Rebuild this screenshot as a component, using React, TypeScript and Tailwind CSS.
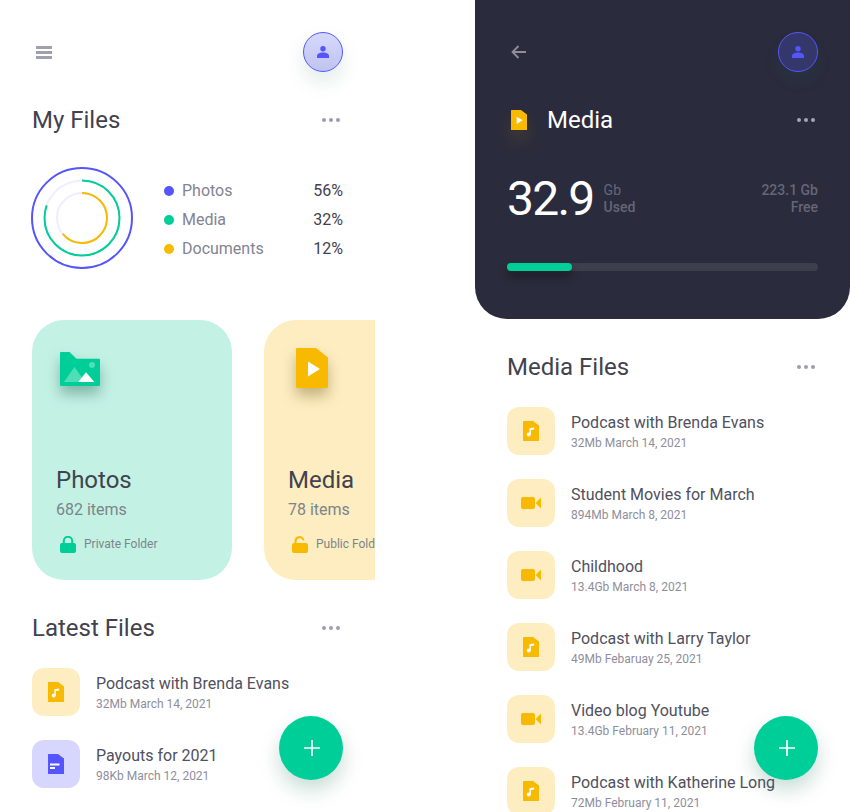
import type { ReactNode } from 'react';

function FileShape({ color, children, className }: { color: string; children?: ReactNode; className?: string }) {
  return (
    <svg width="16" height="20" viewBox="0 0 16 20" className={className}>
      <path d="M.6 0H10l6 4.6v14.8a.6.6 0 0 1-.6.6H.6a.6.6 0 0 1-.6-.6V.6A.6.6 0 0 1 .6 0z" fill={color} />
      {children}
    </svg>
  );
}

function MusicFile() {
  return (
    <FileShape color="#f8ba00">
      <circle cx="5.7" cy="13.4" r="2" fill="#fff" />
      <path d="M6.4 13.4V7.2l4.8-.7v2.1l-3.3.5v4.3z" fill="#fff" />
    </FileShape>
  );
}

function DocFile() {
  return (
    <FileShape color="#5555ff">
      <rect x="2" y="9.5" width="9.5" height="2" fill="#fff" />
      <rect x="2" y="13" width="5" height="2" fill="#fff" />
    </FileShape>
  );
}

function VideoIcon() {
  return (
    <svg width="20" height="12" viewBox="0 0 20 12">
      <rect width="14" height="12" rx="2" fill="#f8ba00" />
      <path d="M20 .5v11L15 6.6v-1.2z" fill="#f8ba00" />
    </svg>
  );
}

function PersonIcon() {
  return (
    <svg width="12" height="12" viewBox="0 0 12 12">
      <circle cx="6" cy="2.7" r="2.7" fill="#5555ff" />
      <path d="M0 12V9.8C0 7.9 2.8 6.6 6 6.6s6 1.3 6 3.2V12z" fill="#5555ff" />
    </svg>
  );
}

function LockIcon({ color, open }: { color: string; open?: boolean }) {
  return (
    <svg width="16" height="17" viewBox="0 0 16 17">
      <rect y="7" width="16" height="10" rx="2" fill={color} />
      <path
        d={open ? 'M3.6 7V5a4 4 0 0 1 7.6-1.6' : 'M3.8 8V5a4.2 4.2 0 0 1 8.4 0v3'}
        fill="none"
        stroke={color}
        strokeWidth="2"
        strokeLinecap={open ? 'round' : 'butt'}
      />
    </svg>
  );
}

function Dots({ className }: { className: string }) {
  return (
    <div className="flex gap-[3px]">
      <span className={`h-1 w-1 rounded-full ${className}`} />
      <span className={`h-1 w-1 rounded-full ${className}`} />
      <span className={`h-1 w-1 rounded-full ${className}`} />
    </div>
  );
}

function Avatar({ dark }: { dark?: boolean }) {
  return (
    <div
      className={`flex h-10 w-10 items-center justify-center rounded-full border border-[#5555ff] ${
        dark
          ? 'bg-[#33376a] shadow-[0_10px_20px_rgba(0,206,152,0.05)]'
          : 'bg-gradient-to-b from-[#d6d8fe] to-[#bfc4ef] shadow-[0_10px_20px_rgba(0,100,70,0.12)]'
      }`}
    >
      <PersonIcon />
    </div>
  );
}

function SectionTitle({ title }: { title: string }) {
  return (
    <div className="flex h-7 items-center justify-between pr-[3px]">
      <h2 className="text-2xl font-normal text-[#42424f]">{title}</h2>
      <Dots className="bg-[#9d9dae]" />
    </div>
  );
}

function FileRow({ icon, bg, title, meta }: { icon: ReactNode; bg: string; title: string; meta: string }) {
  return (
    <div className="flex h-12 items-center gap-4">
      <div className={`flex h-12 w-12 shrink-0 items-center justify-center rounded-xl ${bg}`}>{icon}</div>
      <div className="whitespace-nowrap pt-[2px]">
        <div className="text-base leading-5 text-[#50505e]">{title}</div>
        <div className="mt-[2px] text-xs leading-4 text-[#8e8e9c]">{meta}</div>
      </div>
    </div>
  );
}

function Fab() {
  return (
    <div className="absolute bottom-8 right-8 flex h-16 w-16 items-center justify-center rounded-full bg-[#00ce98] shadow-[0_10px_20px_rgba(0,100,70,0.22)]">
      <svg width="16" height="16" viewBox="0 0 16 16" className="ml-px">
        <path d="M8 0v16M0 8h16" stroke="#fff" strokeWidth="1.7" />
      </svg>
    </div>
  );
}

function Ring() {
  return (
    <svg width="102" height="102" viewBox="0 0 102 102" className="shrink-0">
      <circle cx="51" cy="51" r="50" fill="none" stroke="#5555ff" strokeWidth="2" />
      <circle cx="51" cy="51" r="37.5" fill="none" stroke="#eeeeff" strokeWidth="2" />
      <circle cx="51" cy="51" r="25" fill="none" stroke="#eeeeff" strokeWidth="2" />
      <circle
        cx="51"
        cy="51"
        r="37.5"
        fill="none"
        stroke="#00ce98"
        strokeWidth="2"
        pathLength="100"
        strokeDasharray="80.5 100"
        transform="rotate(-90 51 51)"
      />
      <circle
        cx="51"
        cy="51"
        r="25"
        fill="none"
        stroke="#f8ba00"
        strokeWidth="2"
        pathLength="100"
        strokeDasharray="64 100"
        transform="rotate(-90 51 51)"
      />
    </svg>
  );
}

function LegendRow({ dot, label, value }: { dot: string; label: string; value: string }) {
  return (
    <div className="flex h-[29px] items-center">
      <span className={`h-[10px] w-[10px] rounded-full ${dot}`} />
      <span className="ml-2 text-base text-[#838392]">{label}</span>
      <span className="ml-auto text-base text-[#42424f]">{value}</span>
    </div>
  );
}

function FolderCard({ bg, icon, iconClass, title, items, lock, lockLabel }: {
  bg: string;
  icon: ReactNode;
  iconClass: string;
  title: string;
  items: string;
  lock: ReactNode;
  lockLabel: string;
}) {
  return (
    <div className={`flex h-[260px] w-[200px] shrink-0 flex-col rounded-[32px] px-6 ${bg}`}>
      <div className={iconClass}>{icon}</div>
      <div className="mt-auto text-2xl leading-7 text-[#42424f]">{title}</div>
      <div className="mt-[6px] text-base leading-5 text-[#7b8589]">{items}</div>
      <div className="mb-[27px] mt-[15px] flex h-[18px] items-center gap-2 pl-1">
        {lock}
        <span className="whitespace-nowrap text-xs text-[#7b8589]">{lockLabel}</span>
      </div>
    </div>
  );
}

function FolderIcon() {
  return (
    <svg width="40" height="34" viewBox="0 0 40 34" className="drop-shadow-[0_8px_7px_rgba(0,70,50,0.35)]">
      <path d="M1 0h8.5l7 6.7H39a1 1 0 0 1 1 1V33a1 1 0 0 1-1 1H1a1 1 0 0 1-1-1V1a1 1 0 0 1 1-1z" fill="#00ce98" />
      <circle cx="32" cy="13" r="3" fill="#4fdfb8" />
      <path d="M4 30l10.5-15L25 30z" fill="#4fdfb8" />
      <path d="M18.3 30l7.7-9.7 8.3 9.7z" fill="#fff" />
    </svg>
  );
}

function PlayFile() {
  return (
    <svg width="32" height="40" viewBox="0 0 32 40" className="drop-shadow-[0_8px_7px_rgba(90,70,0,0.35)]">
      <path d="M1 0h19l12 9.5V39a1 1 0 0 1-1 1H1a1 1 0 0 1-1-1V1a1 1 0 0 1 1-1z" fill="#f8ba00" />
      <path d="M12 13.5l12 7.5-12 7.5z" fill="#fff" />
    </svg>
  );
}

function FilesScreen() {
  return (
    <div className="relative h-[812px] w-[375px] shrink-0 overflow-hidden bg-white px-8 pt-8">
      <div className="flex h-10 items-center justify-between">
        <div className="ml-1 flex w-4 flex-col gap-[2px]">
          <span className="h-[3px] bg-[#a0a0b0]" />
          <span className="h-[3px] bg-[#a0a0b0]" />
          <span className="h-[3px] bg-[#a0a0b0]" />
        </div>
        <Avatar />
      </div>

      <div className="mt-[34px]">
        <SectionTitle title="My Files" />
      </div>

      <div className="mt-[33px] flex items-center">
        <div className="-ml-px">
          <Ring />
        </div>
        <div className="ml-[31px] mt-1 flex-1">
          <LegendRow dot="bg-[#5555ff]" label="Photos" value="56%" />
          <LegendRow dot="bg-[#00ce98]" label="Media" value="32%" />
          <LegendRow dot="bg-[#f8ba00]" label="Documents" value="12%" />
        </div>
      </div>

      <div className="-mr-8 mt-[51px] flex gap-8 overflow-hidden">
        <FolderCard
          bg="bg-[#c3f2e5]"
          icon={<FolderIcon />}
          iconClass="ml-1 mt-8"
          title="Photos"
          items="682 items"
          lock={<LockIcon color="#00ce98" />}
          lockLabel="Private Folder"
        />
        <FolderCard
          bg="bg-[#fdedc1]"
          icon={<PlayFile />}
          iconClass="ml-2 mt-7"
          title="Media"
          items="78 items"
          lock={<LockIcon color="#f8ba00" open />}
          lockLabel="Public Folder"
        />
      </div>

      <div className="mt-[34px]">
        <SectionTitle title="Latest Files" />
      </div>

      <div className="mt-[26px] flex flex-col gap-6">
        <FileRow icon={<MusicFile />} bg="bg-[#fdedc1]" title="Podcast with Brenda Evans" meta="32Mb March 14, 2021" />
        <FileRow icon={<DocFile />} bg="bg-[#d6d6ff]" title="Payouts for 2021" meta="98Kb March 12, 2021" />
      </div>

      <Fab />
    </div>
  );
}

const mediaFiles = [
  { kind: 'music', title: 'Podcast with Brenda Evans', meta: '32Mb March 14, 2021' },
  { kind: 'video', title: 'Student Movies for March', meta: '894Mb March 8, 2021' },
  { kind: 'video', title: 'Childhood', meta: '13.4Gb March 8, 2021' },
  { kind: 'music', title: 'Podcast with Larry Taylor', meta: '49Mb Febaruay 25, 2021' },
  { kind: 'video', title: 'Video blog Youtube', meta: '13.4Gb February 11, 2021' },
  { kind: 'music', title: 'Podcast with Katherine Long', meta: '72Mb February 11, 2021' },
];

function MediaScreen() {
  return (
    <div className="relative h-[812px] w-[375px] shrink-0 overflow-hidden bg-white">
      <div className="h-[319px] rounded-b-[32px] bg-[#2a2b3c] px-8 pt-8">
        <div className="flex h-10 items-center justify-between">
          <svg width="15" height="14" viewBox="0 0 15 14" className="ml-[4px]">
            <path d="M15 7H1.5M7.5 1L1.5 7l6 6" fill="none" stroke="#8e8e9e" strokeWidth="1.8" />
          </svg>
          <Avatar dark />
        </div>

        <div className="mt-[34px] flex h-7 items-center justify-between pr-[3px]">
          <div className="flex items-center gap-5">
            <FileShape color="#f8ba00" className="ml-1 drop-shadow-[0_10px_8px_rgba(248,186,0,0.12)]">
              <path d="M5.7 6.7l6 3.6-6 3.6z" fill="#fff" />
            </FileShape>
            <h1 className="text-2xl font-normal text-white">Media</h1>
          </div>
          <Dots className="bg-[#a5a5b5]" />
        </div>

        <div className="mt-[37px] flex items-center">
          <div className="text-5xl font-normal leading-[56px] tracking-[-1.75px] text-white">32.9</div>
          <div className="ml-[10px] text-sm font-medium leading-[17px] text-[#666676]">
            <div className="font-normal">Gb</div>
            <div>Used</div>
          </div>
          <div className="ml-auto text-right text-sm font-medium leading-[17px] text-[#666676]">
            <div>223.1 Gb</div>
            <div>Free</div>
          </div>
        </div>

        <div className="mt-9 h-2 rounded-full bg-[#3d3e4e]">
          <div className="h-2 w-[65px] rounded-full bg-[#00ce98] shadow-[0_6px_10px_rgba(0,0,0,0.35)]" />
        </div>
      </div>

      <div className="px-8 pt-[34px]">
        <SectionTitle title="Media Files" />
        <div className="mt-[26px] flex flex-col gap-6">
          {mediaFiles.map((file) => (
            <FileRow
              key={file.title}
              icon={file.kind === 'music' ? <MusicFile /> : <VideoIcon />}
              bg="bg-[#fdedc1]"
              title={file.title}
              meta={file.meta}
            />
          ))}
        </div>
      </div>

      <Fab />
    </div>
  );
}

export default function App() {
  return (
    <div className="flex h-[812px] w-[850px] justify-between overflow-hidden bg-white font-['Roboto',sans-serif]">
      <FilesScreen />
      <MediaScreen />
    </div>
  );
}
